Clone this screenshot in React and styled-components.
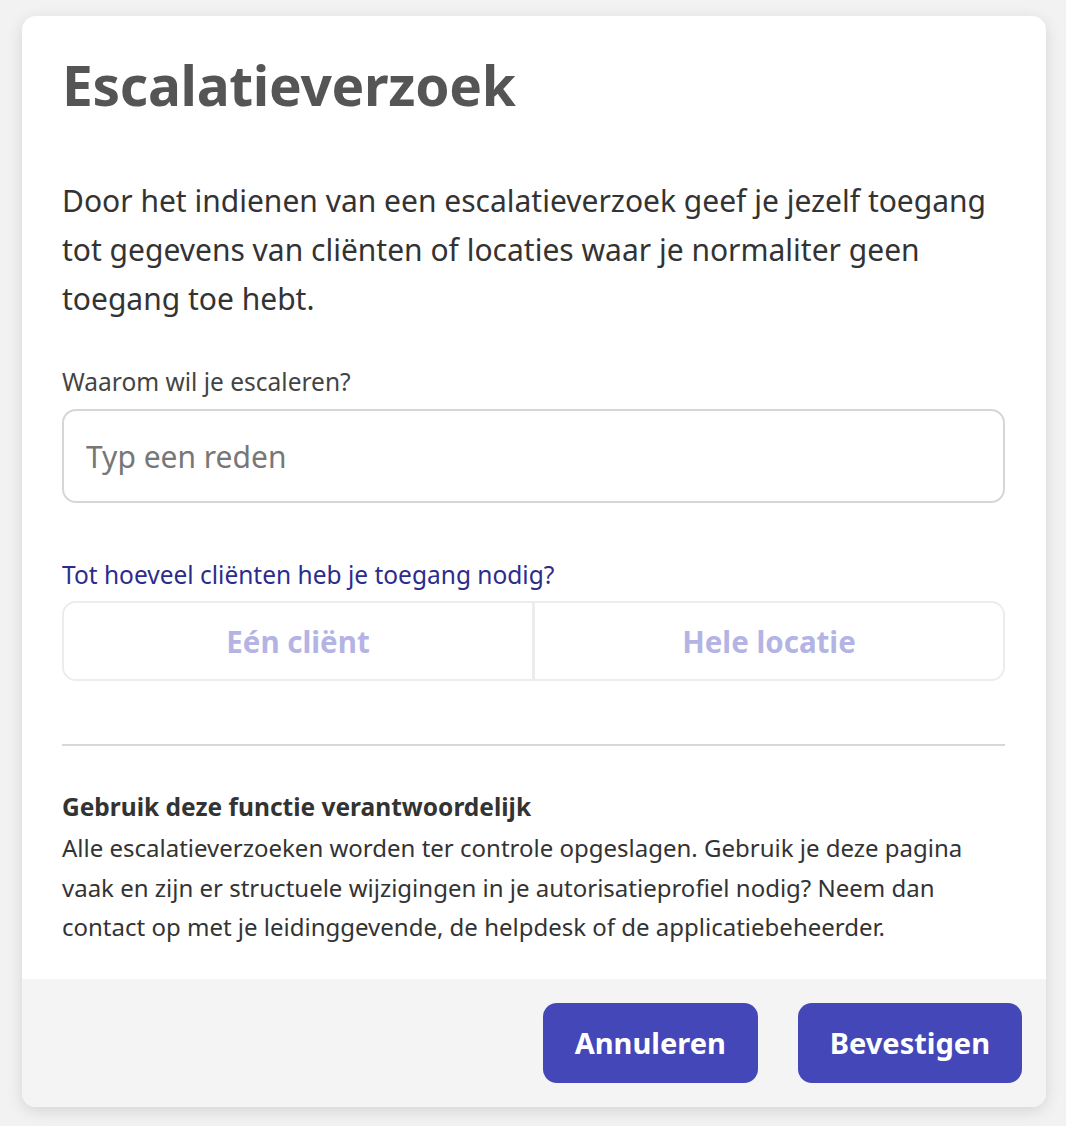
import styled, { createGlobalStyle } from 'styled-components'

const GlobalStyle = createGlobalStyle`
    html, body {
        margin: 0;
        padding: 0;
        background: #f2f2f2;
        font-family: "Noto Sans", "Open Sans", sans-serif;
    }
    * { box-sizing: border-box; }
`

const Page = styled.div`
    padding: 16px 20px 20px 22px;
`
const Dialog = styled.div`
    width: 1024px;
    background: #fff;
    border-radius: 14px;
    overflow: hidden;
    box-shadow: 0 4px 16px rgba(0, 0, 0, 0.12);
`
const Body = styled.div`
    padding: 36px 41px 32px 40px;
    display: flex;
    flex-direction: column;
`
const Title = styled.h1`
    margin: 0;
    font-size: 55px;
    line-height: 66px;
    font-weight: 700;
    color: #555;
    letter-spacing: -0.3px;
`
const Intro = styled.p`
    margin: 58px 0 0;
    font-size: 30px;
    line-height: 49px;
    color: #333;
`
const Label = styled.label`
    display: block;
    margin: ${({ $top }) => $top}px 0 ${({ $bottom }) => $bottom}px;
    font-size: 24.5px;
    line-height: 30px;
    color: ${({ $accent }) => ($accent ? '#2c2c8c' : '#444')};
`
const TextInput = styled.input`
    width: 100%;
    height: 94px;
    padding: 0 22px;
    border: 2px solid #d6d6d6;
    border-radius: 14px;
    font-family: inherit;
    font-size: 30px;
    color: #333;
    outline: none;
    &::placeholder { color: #777; }
`
const Segmented = styled.div`
    display: flex;
    height: 80px;
    border: 2px solid #ececec;
    border-radius: 14px;
    overflow: hidden;
`
const SegmentButton = styled.button`
    flex: 1;
    border: none;
    background: #fff;
    font-family: inherit;
    font-size: 29.5px;
    font-weight: 700;
    color: #b4b4e4;
    & + & { border-left: 3px solid #ececec; }
`
const Divider = styled.hr`
    margin: 63px 0 0;
    border: none;
    border-top: 2px solid #d8d8d8;
`
const NoticeTitle = styled.h3`
    margin: 45px 0 0;
    font-size: 24.5px;
    line-height: 32px;
    font-weight: 700;
    color: #333;
`
const NoticeText = styled.p`
    margin: 5px 0 0;
    font-size: 24px;
    line-height: 39.5px;
    color: #333;
`
const Footer = styled.div`
    display: flex;
    justify-content: flex-end;
    gap: 40px;
    padding: 24px;
    background: #f4f4f4;
`
const PrimaryButton = styled.button`
    height: 80px;
    padding: 0 32px;
    border: none;
    border-radius: 14px;
    background: #4347b8;
    color: #fff;
    font-family: inherit;
    font-size: 29px;
    font-weight: 700;
`

const App = () => {
    return (
        <Page>
            <GlobalStyle />
            <Dialog>
                <Body>
                    <Title>Escalatieverzoek</Title>
                    <Intro>
                        Door het indienen van een escalatieverzoek geef je jezelf toegang tot gegevens van cliënten of locaties waar je normaliter geen toegang toe hebt.
                    </Intro>
                    <Label $top={44} $bottom={12} htmlFor="reason">Waarom wil je escaleren?</Label>
                    <TextInput id="reason" type="text" placeholder="Typ een reden" />
                    <Label $top={57} $bottom={11} $accent>Tot hoeveel cliënten heb je toegang nodig?</Label>
                    <Segmented>
                        <SegmentButton type="button">Eén cliënt</SegmentButton>
                        <SegmentButton type="button">Hele locatie</SegmentButton>
                    </Segmented>
                    <Divider />
                    <NoticeTitle>Gebruik deze functie verantwoordelijk</NoticeTitle>
                    <NoticeText>
                        Alle escalatieverzoeken worden ter controle opgeslagen. Gebruik je deze pagina vaak en zijn er structuele wijzigingen in je autorisatieprofiel nodig? Neem dan contact op met je leidinggevende, de helpdesk of de applicatiebeheerder.
                    </NoticeText>
                </Body>
                <Footer>
                    <PrimaryButton type="button">Annuleren</PrimaryButton>
                    <PrimaryButton type="button">Bevestigen</PrimaryButton>
                </Footer>
            </Dialog>
        </Page>
    )
}

export default App
